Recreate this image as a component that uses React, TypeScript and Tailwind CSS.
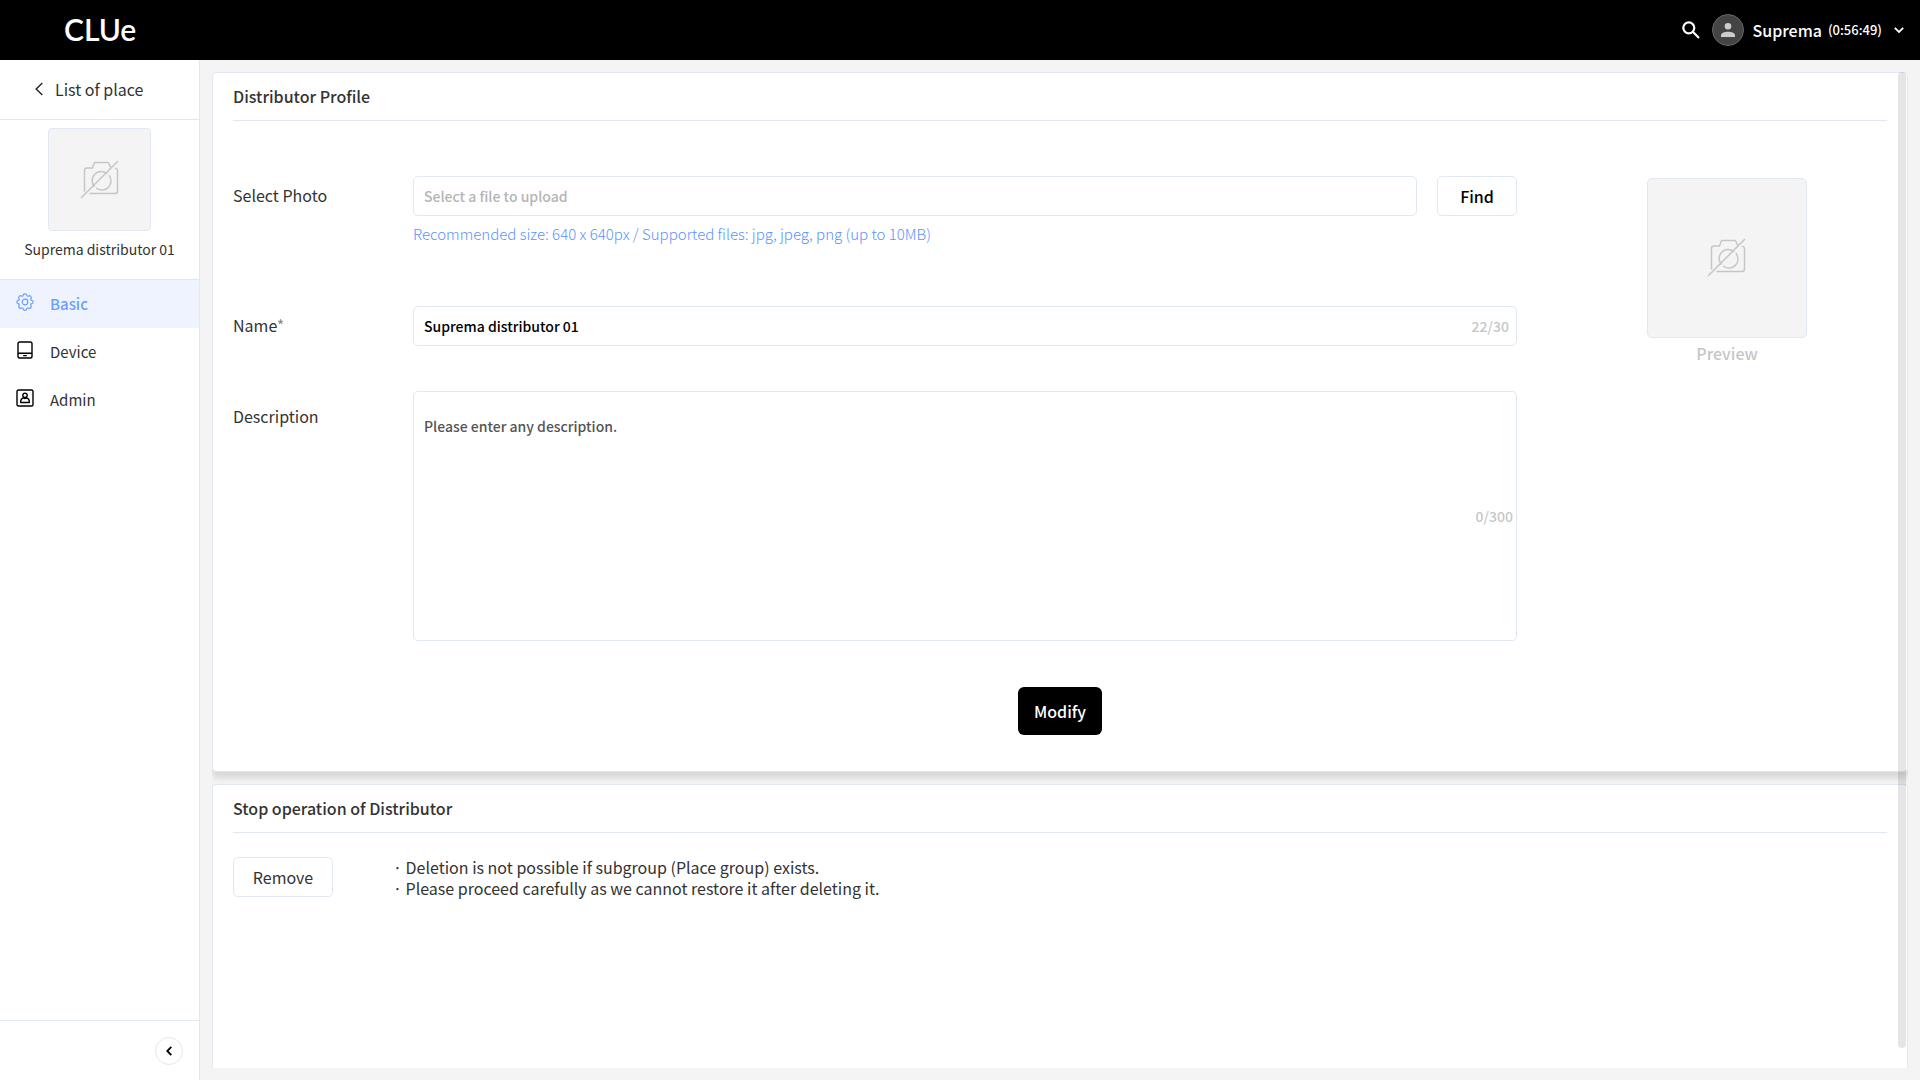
import { useState } from "react"
import type { ReactNode } from "react"

const menus = [
  { key: "basic", title: "Basic", icon: <GearIcon /> },
  { key: "device", title: "Device", icon: <DeviceIcon /> },
  { key: "admin", title: "Admin", icon: <AdminIcon /> },
]

const notices = [
  "Deletion is not possible if subgroup (Place group) exists.",
  "Please proceed carefully as we cannot restore it after deleting it.",
]

function GearIcon() {
  return (
    <svg viewBox="0 0 18 18" className="size-[18px]" fill="none" stroke="currentColor" strokeWidth="1.2" strokeLinejoin="round">
      <path d="M7.3 1.900C7.500.4 10.500.4 10.700 1.900c.2 1.300 1 1.700 2.100 1 1.200-.8 3.200 1.200 2.300 2.400-.8 1.100-.4 1.900.8 2.100 1.600.3 1.600 3.100 0 3.300-1.200.2-1.600 1-.8 2.100.8 1.200-1.100 3.200-2.300 2.400-1.100-.7-1.900-.3-2.100.9-.3 1.600-3.100 1.600-3.400 0-.2-1.200-1-1.600-2.100-.9-1.200.8-3.200-1.200-2.300-2.400.8-1.100.4-1.900-.8-2.100-1.600-.2-1.600-3 0-3.300 1.200-.2 1.600-1 .8-2.100-.9-1.200 1.100-3.200 2.300-2.400 1.100.7 1.900.3 2.100-1z" />
      <circle cx="9" cy="9" r="2.800" />
    </svg>
  )
}

function DeviceIcon() {
  return (
    <svg viewBox="0 0 18 18" className="size-[18px]" fill="none" stroke="currentColor" strokeWidth="1.4">
      <rect x="2" y="1" width="14" height="16" rx="1.800" />
      <path d="M2 12.300h14M7.200 14.600h3.600" />
    </svg>
  )
}

function AdminIcon() {
  return (
    <svg viewBox="0 0 18 18" className="size-[18px]" fill="none" stroke="currentColor" strokeWidth="1.4" strokeLinejoin="round">
      <rect x="1" y="1" width="16" height="16" rx="1.500" />
      <circle cx="9" cy="6.300" r="2.200" />
      <path d="M4.700 13.500v-1.200c0-2 1.500-3 2.900-3.400.8.7 2 .7 2.800 0 1.400.4 2.900 1.400 2.900 3.400v1.200z" />
    </svg>
  )
}

function NoPhotoIcon() {
  return (
    <svg viewBox="0 0 40 40" className="size-10" fill="none" stroke="#c6c6c6" strokeWidth="1.5" strokeLinecap="round">
      <path d="M4.500 31V10.500a2.500 2.500 0 0 1 2.500-2.500h5.500l1.700-4.700a1.200 1.200 0 0 1 1.100-.8h12.400a1.200 1.200 0 0 1 1.100.8L30.500 7" />
      <path d="M35.500 8.200a2.500 2.500 0 0 1 2 2.300v20.500a2.500 2.500 0 0 1-2.500 2.500H10" />
      <path d="M26.700 13.400A9 9 0 0 0 14.200 26.200M29.300 15.800A9 9 0 0 1 16.800 28.400" />
      <path d="M1.500 37.500 37.500 1.500" />
    </svg>
  )
}

function Card({ title, className, children }: { title: string; className: string; children: ReactNode }) {
  return (
    <section className={`border border-[#e2e8f0] bg-white px-5 ${className}`}>
      <h2 className="border-b border-[#e2e8f0] pt-[11px] pb-3 text-base leading-6 font-medium">{title}</h2>
      {children}
    </section>
  )
}

function Header() {
  return (
    <header className="flex h-[60px] shrink-0 items-center justify-between bg-black pr-4 pl-16 text-white">
      <h1 className="pb-0.5 font-['Lato'] text-[30px] leading-8 font-semibold">CLUe</h1>
      <div className="flex items-center">
        <button aria-label="Search" className="mr-3">
          <svg viewBox="0 0 18 18" className="size-[18px]" fill="none" stroke="white" strokeWidth="2.2">
            <circle cx="6.800" cy="6.800" r="5.500" />
            <path d="m10.800 10.800 6.200 6.200" />
          </svg>
        </button>
        <button className="flex items-center">
          <span className="mr-2 flex size-8 items-center justify-center rounded-full border border-[#666] bg-[#444]">
            <svg viewBox="0 0 14 14" className="size-[14px]" fill="#ccc">
              <circle cx="7" cy="3.300" r="3.300" />
              <path d="M0 14v-1.600C0 9.800 3.600 8.700 7 8.700s7 1.100 7 3.700V14z" />
            </svg>
          </span>
          <span className="text-base font-medium">Suprema</span>
          <span className="mr-3 ml-1.5 text-[13px] font-medium">(0:56:49)</span>
          <svg viewBox="0 0 10 6" className="w-[10px]" fill="none" stroke="white" strokeWidth="1.8">
            <path d="m.8.8 4.200 4.200L9.200.8" />
          </svg>
        </button>
      </div>
    </header>
  )
}

function Sidebar() {
  return (
    <aside className="flex w-[200px] shrink-0 flex-col border-r border-[#e2e8f0] bg-white">
      <a href="#places" className="flex h-[60px] items-center gap-3 border-b border-[#e2e8f0] pb-0.5 pl-[35px] text-base">
        <svg viewBox="0 0 8 14" className="h-[14px] w-2" fill="none" stroke="#222" strokeWidth="1.4">
          <path d="M7.300 1 1.200 7l6.100 6" />
        </svg>
        List of place
      </a>
      <div className="flex flex-col items-center border-b border-[#e2e8f0] pt-2 pb-5">
        <div className="flex size-[103px] items-center justify-center rounded border border-[#e2e8f0] bg-[#f4f4f4]">
          <NoPhotoIcon />
        </div>
        <p className="mt-2 text-sm">Suprema distributor 01</p>
      </div>
      <nav className="flex flex-1 flex-col">
        {menus.map((menu) => (
          <a
            key={menu.key}
            href={`#${menu.key}`}
            className={
              menu.key === "basic"
                ? "flex h-12 items-center gap-4 bg-[#eff3ff] pl-4 text-[15px] font-medium text-[#6b9fff]"
                : "flex h-12 items-center gap-4 pl-4 text-[15px]"
            }
          >
            <span className={menu.key === "basic" ? "mb-1 text-[#6b9fff]" : "mb-1 text-black"}>{menu.icon}</span>
            {menu.title}
          </a>
        ))}
      </nav>
      <div className="flex h-[60px] items-center justify-end border-t border-[#e2e8f0] pr-4">
        <button aria-label="Collapse" className="flex size-7 items-center justify-center rounded-full border border-[#e2e8f0]">
          <svg viewBox="0 0 6 10" className="h-[10px] w-[6px]" fill="none" stroke="black" strokeWidth="1.800">
            <path d="M5.300.8 1.200 5l4.100 4.200" />
          </svg>
        </button>
      </div>
    </aside>
  )
}

export default function App() {
  const [name, setName] = useState("Suprema distributor 01")
  const [description, setDescription] = useState("")

  return (
    <div className="flex h-screen flex-col bg-[#f4f4f4] font-['Noto_Sans_CJK_KR',sans-serif] text-[#333]">
      <Header />
      <div className="flex min-h-0 flex-1">
        <Sidebar />
        <main className="relative m-3 flex min-w-0 flex-1 flex-col gap-3 overflow-hidden">
          <Card title="Distributor Profile" className="shrink-0 rounded shadow-[0_6px_6px_rgba(0,0,0,0.12)]">
            <div className="flex pt-[55px]">
              <div className="flex min-w-0 flex-1 flex-col text-base">
                <div className="flex">
                  <label htmlFor="photo" className="w-[180px] shrink-0 leading-[38px]">Select Photo</label>
                  <div className="min-w-0 flex-1">
                    <div className="flex gap-5">
                      <input
                        id="photo"
                        readOnly
                        placeholder="Select a file to upload"
                        className="h-10 min-w-0 flex-1 rounded-[5px] border border-[#e2e8f0] px-[10px] text-sm font-medium placeholder:text-[#b5b5b5]"
                      />
                      <button className="h-10 w-20 rounded-[5px] border border-[#e2e8f0] font-medium text-black">Find</button>
                    </div>
                    <p className="mt-[6px] text-[15px] leading-6 font-light text-[#5b93ff]">
                      Recommended size: 640 x 640px / Supported files: jpg, jpeg, png (up to 10MB)
                    </p>
                  </div>
                </div>
                <div className="mt-[60px] flex">
                  <label htmlFor="name" className="w-[180px] shrink-0 leading-[38px]">
                    Name<span className="text-[#888]">*</span>
                  </label>
                  <div className="relative min-w-0 flex-1">
                    <input
                      id="name"
                      value={name}
                      maxLength={30}
                      onChange={(e) => setName(e.target.value)}
                      className="block h-10 w-full rounded-[5px] border border-[#e2e8f0] px-[10px] text-sm font-medium text-black"
                    />
                    <span className="absolute top-0 right-2 text-sm leading-10 font-medium text-[#c6c6c6]">{name.length}/30</span>
                  </div>
                </div>
                <div className="mt-[45px] flex">
                  <label htmlFor="description" className="mt-[13px] w-[180px] shrink-0 leading-6">Description</label>
                  <div className="relative min-w-0 flex-1">
                    <textarea
                      id="description"
                      value={description}
                      maxLength={300}
                      onChange={(e) => setDescription(e.target.value)}
                      placeholder="Please enter any description."
                      className="block h-[250px] w-full resize-none rounded-[5px] border border-[#e2e8f0] px-[10px] py-6 text-sm font-medium placeholder:text-[#555]"
                    />
                    <span className="absolute inset-y-0 right-1 flex items-center text-sm font-medium text-[#c6c6c6]">
                      {description.length}/300
                    </span>
                  </div>
                </div>
              </div>
              <div className="ml-[50px] flex w-80 shrink-0 flex-col items-center pt-0.5">
                <div className="flex size-40 items-center justify-center rounded-[5px] border border-[#e2e8f0] bg-[#f4f4f4]">
                  <NoPhotoIcon />
                </div>
                <p className="mt-1 text-base leading-[22px] font-medium text-[#c6c6c6]">Preview</p>
              </div>
            </div>
            <div className="flex justify-center pt-[46px] pb-9">
              <button className="h-12 rounded-md bg-black px-4 text-base font-medium text-white">Modify</button>
            </div>
          </Card>
          <Card title="Stop operation of Distributor" className="flex-1 rounded-t border-b-0">
            <div className="flex pt-6">
              <button className="h-10 w-[100px] rounded-[5px] border border-[#e2e8f0] text-base">Remove</button>
              <ul className="ml-[60px] text-base leading-[21px]">
                {notices.map((notice) => (
                  <li key={notice}>· {notice}</li>
                ))}
              </ul>
            </div>
          </Card>
          <div className="absolute top-0 right-[2px] bottom-5 w-2 rounded-full bg-black/10" />
        </main>
      </div>
    </div>
  )
}
